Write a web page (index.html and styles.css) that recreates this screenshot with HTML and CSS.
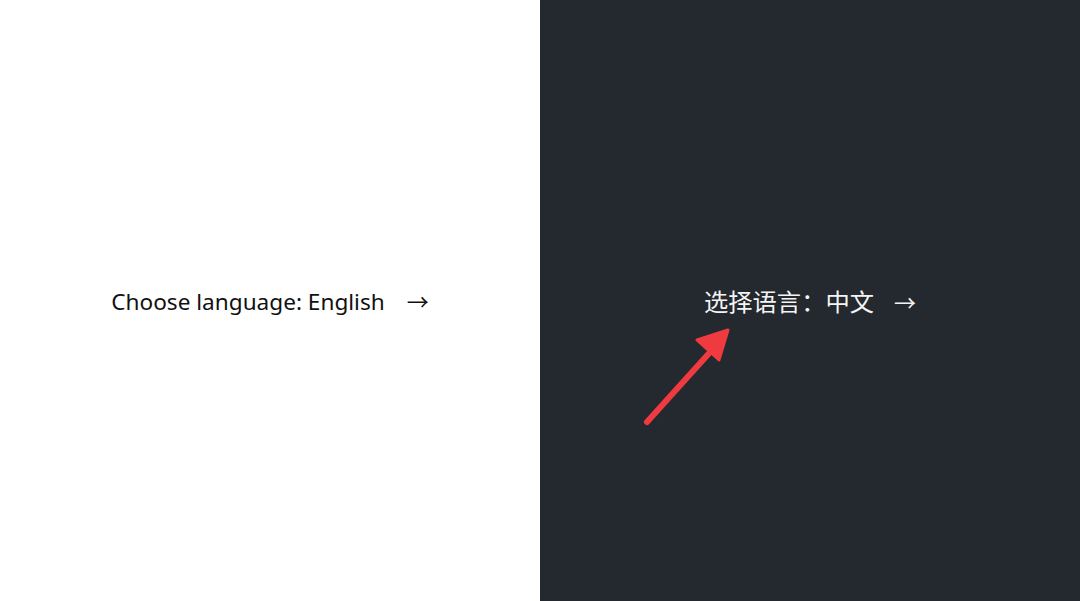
FILE: index.html
```html
<!DOCTYPE html>
<html lang="zh-CN">
<head>
<meta charset="utf-8">
<title>Choose language</title>
<link rel="stylesheet" href="styles.css">
</head>
<body>
<main class="split">
  <section class="half light">
    <a class="choice" href="#">Choose language: English<span class="go">→</span></a>
  </section>
  <section class="half dark">
    <a class="choice cjk" href="#">选择语言：中文<span class="go">→</span></a>
    <svg class="pointer" width="110" height="120" viewBox="0 0 110 120" aria-hidden="true">
      <line x1="10" y1="112" x2="75" y2="40" stroke="#ef3b40" stroke-width="6" stroke-linecap="round"/>
      <polygon points="91,20 60,30 82,50" fill="#ef3b40" stroke="#ef3b40" stroke-width="3" stroke-linejoin="round"/>
    </svg>
  </section>
</main>
</body>
</html>
```
FILE: styles.css
```css
html, body {
  margin: 0;
  padding: 0;
}
body {
  font-family: "Noto Sans", "Noto Sans CJK SC", sans-serif;
}
.split {
  display: flex;
  width: 1080px;
  height: 601px;
}
.half {
  position: relative;
  flex: 0 0 540px;
  display: flex;
  align-items: center;
  justify-content: center;
}
.light {
  background: #ffffff;
  color: #111111;
}
.dark {
  background: #24282f;
  color: #f4f4f4;
}
.choice {
  color: inherit;
  text-decoration: none;
  font-size: 22.6px;
  line-height: 30px;
  margin-top: 2px;
}
.choice.cjk {
  font-size: 24.3px;
  margin-left: 0;
}
.go {
  margin-left: 22px;
  font-size: 22px;
}
.cjk .go {
  margin-left: 20px;
}
.pointer {
  position: absolute;
  top: 310px;
  left: 97px;
}
```
